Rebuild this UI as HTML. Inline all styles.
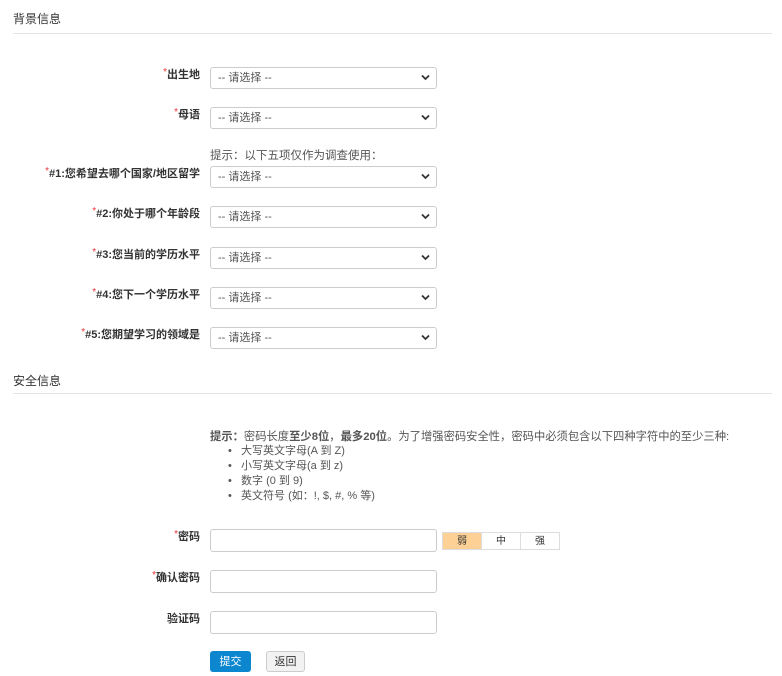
<!DOCTYPE html>
<html><head><meta charset="utf-8"><style>
body{margin:0;width:782px;height:676px;background:#fff;font-family:"Liberation Sans","Noto Sans CJK SC",sans-serif;font-size:11px;color:#333;position:relative;overflow:hidden}
.a{position:absolute}
.h{left:13px;font-size:12px;color:#333}
.line{left:13px;width:759px;height:1px;background:#e5e5e5}
.lbl{right:582px;font-weight:bold;font-size:11px;color:#333;white-space:nowrap}
.lbl i{color:#e33;font-style:normal;font-weight:normal;position:relative;top:-3px;font-size:10px}
.sel{left:210px;width:225px;height:20px;border:1px solid #ccc;border-radius:3px;color:#555;line-height:20px;text-indent:7px;font-size:11px}
.sel svg{position:absolute;right:6px;top:6px}
.inp{left:210px;width:225px;height:21px;border:1px solid #ccc;border-radius:3px}
.tip{color:#555;font-size:11px}
</style></head><body>
<div class="a h" style="top:10px">背景信息</div>
<div class="a line" style="top:33px"></div>

<div class="a lbl" style="top:66px"><i>*</i>出生地</div>
<div class="a sel" style="top:67px">-- 请选择 --<svg width="9" height="7" viewBox="0 0 9 7"><path d="M1 1.5L4.5 5 8 1.5" stroke="#333" stroke-width="1.8" fill="none"/></svg></div>
<div class="a lbl" style="top:106px"><i>*</i>母语</div>
<div class="a sel" style="top:107px">-- 请选择 --<svg width="9" height="7" viewBox="0 0 9 7"><path d="M1 1.5L4.5 5 8 1.5" stroke="#333" stroke-width="1.8" fill="none"/></svg></div>
<div class="a tip" style="left:210px;top:147px;font-size:11.5px">提示：以下五项仅作为调查使用：</div>
<div class="a lbl" style="top:165px"><i>*</i>#1:您希望去哪个国家/地区留学</div>
<div class="a sel" style="top:166px">-- 请选择 --<svg width="9" height="7" viewBox="0 0 9 7"><path d="M1 1.5L4.5 5 8 1.5" stroke="#333" stroke-width="1.8" fill="none"/></svg></div>
<div class="a lbl" style="top:205px"><i>*</i>#2:你处于哪个年龄段</div>
<div class="a sel" style="top:206px">-- 请选择 --<svg width="9" height="7" viewBox="0 0 9 7"><path d="M1 1.5L4.5 5 8 1.5" stroke="#333" stroke-width="1.8" fill="none"/></svg></div>
<div class="a lbl" style="top:246px"><i>*</i>#3:您当前的学历水平</div>
<div class="a sel" style="top:247px">-- 请选择 --<svg width="9" height="7" viewBox="0 0 9 7"><path d="M1 1.5L4.5 5 8 1.5" stroke="#333" stroke-width="1.8" fill="none"/></svg></div>
<div class="a lbl" style="top:286px"><i>*</i>#4:您下一个学历水平</div>
<div class="a sel" style="top:287px">-- 请选择 --<svg width="9" height="7" viewBox="0 0 9 7"><path d="M1 1.5L4.5 5 8 1.5" stroke="#333" stroke-width="1.8" fill="none"/></svg></div>
<div class="a lbl" style="top:326px"><i>*</i>#5:您期望学习的领域是</div>
<div class="a sel" style="top:327px">-- 请选择 --<svg width="9" height="7" viewBox="0 0 9 7"><path d="M1 1.5L4.5 5 8 1.5" stroke="#333" stroke-width="1.8" fill="none"/></svg></div>

<div class="a h" style="top:372px">安全信息</div>
<div class="a line" style="top:393px"></div>

<div class="a tip" style="left:210px;top:428px;white-space:nowrap;font-size:11.3px"><b>提示：</b>密码长度<b>至少8位</b>，<b>最多20位</b>。为了增强密码安全性，密码中必须包含以下四种字符中的至少三种:</div>
<div class="a tip" style="left:228px;top:444px;line-height:15px">
•&nbsp;&nbsp; 大写英文字母(A 到 Z)<br>•&nbsp;&nbsp; 小写英文字母(a 到 z)<br>•&nbsp;&nbsp; 数字 (0 到 9)<br>•&nbsp;&nbsp; 英文符号 (如：!, $, #, % 等)</div>

<div class="a lbl" style="top:528px"><i>*</i>密码</div>
<div class="a inp" style="top:529px"></div>
<div class="a" style="left:442px;top:532px;display:flex;font-size:10px">
<div style="width:38px;height:16px;background:#fdd196;border:1px solid #ddd;text-align:center;line-height:17px">弱</div>
<div style="width:38px;height:16px;border:1px solid #ddd;border-left:none;text-align:center;line-height:17px">中</div>
<div style="width:38px;height:16px;border:1px solid #ddd;border-left:none;text-align:center;line-height:17px">强</div></div>
<div class="a lbl" style="top:569px"><i>*</i>确认密码</div>
<div class="a inp" style="top:570px"></div>
<div class="a lbl" style="top:610px">验证码</div>
<div class="a inp" style="top:611px"></div>

<div class="a" style="left:210px;top:651px;width:41px;height:21px;background:#0b86cf;border-radius:3px;color:#fff;text-align:center;line-height:22px">提交</div>
<div class="a" style="left:266px;top:651px;width:37px;height:19px;background:#f2f2f2;border:1px solid #ccc;border-radius:3px;color:#333;text-align:center;line-height:20px">返回</div>
</body></html>
